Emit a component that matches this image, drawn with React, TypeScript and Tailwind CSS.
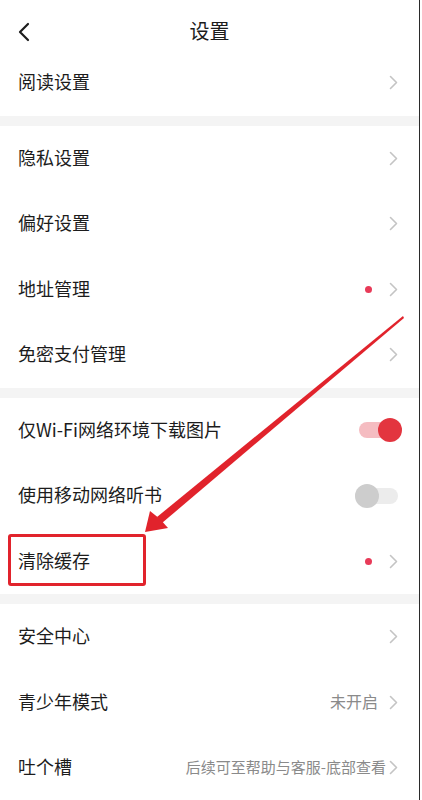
import type { ReactNode } from "react";

const font = { fontFamily: '"Noto Sans CJK SC", "Noto Sans", sans-serif' };

function Chevron() {
  return (
    <svg width="9" height="15" viewBox="0 0 9 15" fill="none" stroke="#c4c4c4" strokeWidth="1.6" strokeLinecap="round" strokeLinejoin="round">
      <path d="M1.5 1.5l6 6-6 6" />
    </svg>
  );
}

function Dot() {
  return <span className="w-[7px] h-[7px] rounded-full bg-[#e83a58] mr-[17px]" />;
}

function Toggle({ on }: { on: boolean }) {
  if (on) {
    return (
      <div className="relative w-[42px] h-[16px] rounded-full bg-[#f5bcc1] mr-[-3px]">
        <span className="absolute right-[-1px] top-[-4px] w-[24px] h-[24px] rounded-full bg-[#e3353f]" />
      </div>
    );
  }
  return (
    <div className="relative w-[43px] h-[16px] rounded-full bg-[#ececec]">
      <span className="absolute left-0 top-[-4px] w-[24px] h-[24px] rounded-full bg-[#cdcdcd]" />
    </div>
  );
}

function Row({ label, right, chevron = true }: { label: string; right?: ReactNode; chevron?: boolean }) {
  return (
    <div className="h-[65.5px] flex items-center pl-[18px] pr-[21px] bg-white">
      <span className="flex-1 text-[18px] text-[#1c1c1c] leading-none pb-[3px]">{label}</span>
      {right}
      {chevron && <Chevron />}
    </div>
  );
}

const Gap = () => <div className="h-[10px] bg-[#f4f4f4]" />;

export default function App() {
  return (
    <div className="relative w-[422px] h-[800px] overflow-hidden bg-white" style={font}>
      <div className="w-[420px] h-full border-r border-[#2a2a2a]">
        <header className="h-[50px] relative flex items-center justify-center pt-[12px]">
          <svg className="absolute left-[17px] top-[22px]" width="14" height="20" viewBox="0 0 14 20" fill="none" stroke="#1c1c1c" strokeWidth="2.2" strokeLinecap="round" strokeLinejoin="round">
            <path d="M11 2L3 10l8 8" />
          </svg>
          <h1 className="text-[20px] text-[#1c1c1c] leading-none">设置</h1>
        </header>

        <Row label="阅读设置" />
        <Gap />
        <Row label="隐私设置" />
        <Row label="偏好设置" />
        <Row label="地址管理" right={<Dot />} />
        <Row label="免密支付管理" />
        <Gap />
        <Row label="仅Wi-Fi网络环境下载图片" right={<Toggle on />} chevron={false} />
        <Row label="使用移动网络听书" right={<Toggle on={false} />} chevron={false} />
        <Row label="清除缓存" right={<Dot />} />
        <Gap />
        <Row label="安全中心" />
        <Row label="青少年模式" right={<span className="text-[16px] text-[#8a8a8a] mr-[11px] leading-none pb-[2px]">未开启</span>} />
        <Row label="吐个槽" right={<span className="text-[15px] text-[#8a8a8a] mr-[3px] leading-none pb-[2px]">后续可至帮助与客服-底部查看</span>} />
      </div>

      {/* annotation overlay */}
      <div className="absolute left-[8px] top-[534px] w-[138px] h-[52px] border-[3.5px] border-[#e1232c] rounded-[3px]" />
      <svg className="absolute inset-0 pointer-events-none" width="422" height="800" viewBox="0 0 422 800">
        <polygon points="403,316 404,318 162,523 157,517" fill="#e1232c" />
        <polygon points="145,532 150,511 160,519 168,528" fill="#e1232c" />
      </svg>
    </div>
  );
}
